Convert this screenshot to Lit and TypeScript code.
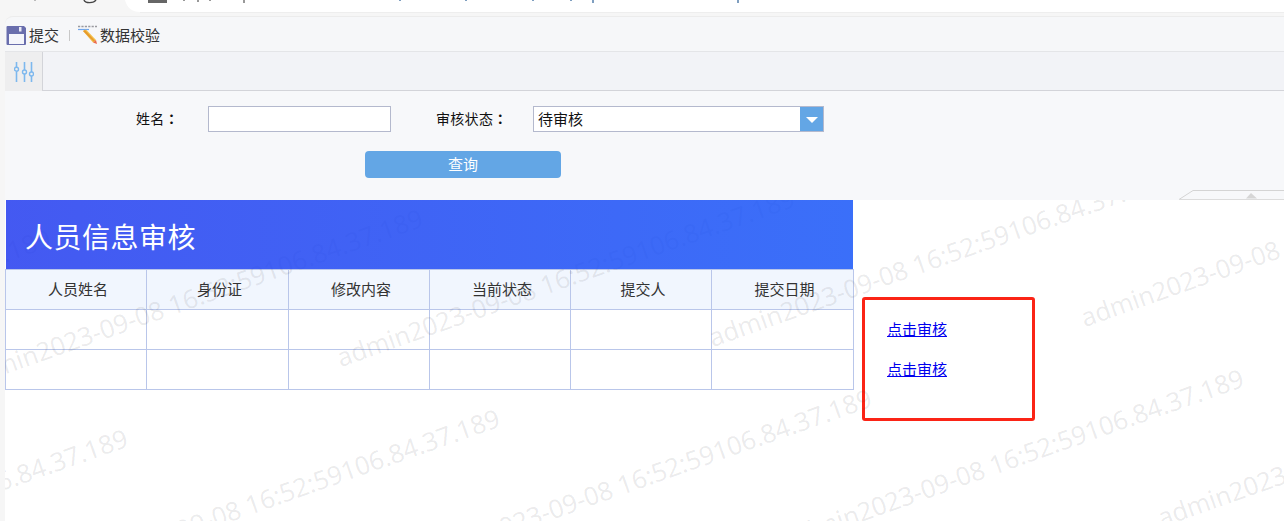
import { LitElement, html, css, svg } from "lit";
import { customElement } from "lit/decorators.js";

const WM = "admin2023-09-08 16:52:59106.84.37.189";
const marks: { x: number; y: number }[] = [];
for (let i = 0; i < 5; i++) {
  marks.push({ x: -407 + 372 * i, y: 210 - 20 * i });
  marks.push({ x: -330 + 372 * i, y: 410 - 20 * i });
}
const HEAD = ["人员姓名", "身份证", "修改内容", "当前状态", "提交人", "提交日期"];
const COLS = [141, 142, 141, 141, 141, 142];
const TICKS = [399, 465, 532, 570, 592, 737];

@customElement("app-root")
export class AppRoot extends LitElement {
  static styles = css`
    :host { display: block; position: relative; width: 1284px; height: 521px; overflow: hidden; background: #f6f6f6;
      font-family: "Noto Sans CJK SC", "Liberation Sans", sans-serif; font-size: 14px; color: #222; }
    .chrome { display: block; width: 1284px; height: 16px; }
    .frame { padding-left: 5px; }
    .toolbar { height: 36px; box-sizing: border-box; background: #f6f7f9; border-top: 1px solid #ececec;
      border-bottom: 1px solid #e4e5e8; border-top-left-radius: 8px; display: flex; align-items: center; padding: 2px 0 0 1px; font-size: 15px; }
    .tool { display: flex; align-items: center; color: #333; }
    .tool svg { display: block; flex: none; }
    .tool span { margin: -2px 0 0 2px; }
    .sep { width: 1px; height: 11px; background: #c8c8c8; margin: 0 8px 0 10px; }
    .tabs { height: 39px; box-sizing: border-box; background: #f2f3f7; border-bottom: 1px solid #d3d4d9; display: flex; }
    .tab { width: 38px; background: #eeeeef; border-right: 1px solid #d3d4d9; margin-bottom: -1px; display: flex; align-items: center; justify-content: center; box-sizing: border-box; }
    .form { height: 109px; box-sizing: border-box; background: #f7f8fa; padding-top: 15px; }
    .row { display: flex; align-items: center; height: 26px; color: #111; font-size: 14px; }
    .label1, .label2 { margin-top: -2px; letter-spacing: 0.3px; }
    .label1 { margin-left: 131px; width: 72px; }
    .label2 { margin-left: 45px; width: 97px; }
    .colon { font-family: "Noto Sans CJK TC", sans-serif; letter-spacing: 0; font-weight: 700; }
    .input { width: 183px; height: 26px; box-sizing: border-box; background: #fff; border: 1px solid #b4b9cd; }
    .select { width: 291px; height: 26px; box-sizing: border-box; background: #fff; border: 1px solid #b4b9cd; display: flex; align-items: center; justify-content: space-between; padding-left: 4px; color: #111; font-size: 15px; }
    .select span { margin-top: -2px; }
    .arrow { width: 23px; height: 24px; background: #63a6e5; display: flex; align-items: center; justify-content: center; }
    .arrow i { display: block; width: 0; height: 0; border-left: 6px solid transparent; border-right: 6px solid transparent; border-top: 6px solid #fff; margin-top: 2px; }
    .query { display: block; margin: 19px 0 0 360px; width: 196px; height: 27px; padding: 0 0 2px; border: 0; border-radius: 4px; background: #63a6e5; color: #fff; font: inherit; font-size: 15px; text-align: center; }
    .tag { position: absolute; right: 0; top: 190px; width: 105px; height: 10px; }
    .content { position: relative; height: 321px; background: #fff; padding-left: 1px; display: flex; overflow: hidden; }
    .main { width: 849px; flex: none; }
    .title { position: relative; z-index: 1; height: 69px; box-sizing: border-box; width: 847px; background: linear-gradient(90deg, rgba(35, 60, 239, 0.85), rgba(24, 86, 248, 0.85)); color: #fff; font-size: 28px; line-height: 72px; padding-left: 19px; letter-spacing: 0.5px; }
    table { border-collapse: collapse; table-layout: fixed; width: 848px; margin-left: -1px; }
    td, th { border: 1px solid #b9c6ea; height: 40px; padding: 0; font-weight: 400; text-align: center; color: #333; font-size: 15px; box-sizing: border-box; }
    th { background: #f1f6fe; padding: 0 0 2px 4px; }
    .review { width: 173px; height: 124px; box-sizing: border-box; margin: 97px 0 0 7px; border: 3px solid #fb2416; border-radius: 3px; padding-top: 9px; padding-left: 22px; flex: none; font-size: 15px; }
    .review a { display: block; height: 40px; line-height: 40px; color: #0000ee; text-decoration: none; }
    .review a span { text-decoration: underline; }
    .wm-layer { position: absolute; inset: 0; pointer-events: none; overflow: hidden; }
    .wm { position: absolute; white-space: nowrap; font-family: "Open Sans", sans-serif; font-size: 25.6px; line-height: 1; color: rgba(60, 60, 70, 0.11); transform: rotate(-19.5deg); transform-origin: 0 100%; margin-top: -25px; }
  `;

  private chrome() {
    return html`<svg class="chrome" viewBox="0 0 1284 16">
      <rect x="0" y="0" width="1284" height="16" fill="#f6f6f6"></rect>
      <path d="M125 0 C127 8 132 12 140 12 H1284 V0 Z" fill="#fff"></path>
      <path d="M140 12.5 H1284" stroke="#eeeeee"></path>
      <path d="M84 0 C85 3.5 94 3.5 96 0" fill="none" stroke="#444" stroke-width="1.4"></path>
      <rect x="34" y="0" width="2" height="1" fill="#bbb"></rect>
      <rect x="148" y="0" width="19" height="3" fill="#666"></rect>
      <rect x="183" y="0" width="2" height="1" fill="#999"></rect>
      <rect x="197" y="0" width="2" height="2" fill="#999"></rect>
      <rect x="209" y="0" width="2" height="1" fill="#999"></rect>
      <rect x="243" y="0" width="2" height="3" fill="#999"></rect>
      ${TICKS.map(
        (x) => svg`<rect x=${x} y="0" width="2" height=${x > 580 ? 3 : 1} fill="#7f9fc0"></rect>`
      )}
    </svg>`;
  }

  private saveIcon() {
    return html`<svg width="21" height="21" viewBox="0 0 21 21">
      <path d="M1.5 1 H18 L20 3 V19 a1 1 0 0 1 -1 1 H1.5 a1 1 0 0 1 -1 -1 V2 a1 1 0 0 1 1 -1 Z" fill="#696ead"></path>
      <rect x="3" y="9" width="15" height="10" fill="#f4f5fb"></rect>
      <rect x="13" y="2" width="2.5" height="4.5" fill="#e9eaf6"></rect>
    </svg>`;
  }

  private checkIcon() {
    return html`<svg width="20" height="20" viewBox="0 0 20 20">
      <path d="M0 4.5 H11" stroke="#6ea6ee" stroke-width="1.2"></path>
      <path d="M0 1.5 H19" stroke="#9a9aa0" stroke-width="1.4" stroke-dasharray="2.2 1.2"></path>
      <path d="M5 6 L8 4.5 L18 15 L15 17.5 Z" fill="#f3c04a"></path>
      <path d="M5 6 L7 5 L17 15.8 L15.8 16.8 Z" fill="#e79a2c"></path>
      <path d="M15 17.5 L18 15 L19 19 Z" fill="#ec6a4c"></path>
    </svg>`;
  }

  private sliders() {
    return html`<svg width="20" height="20" viewBox="0 0 20 20" fill="none" stroke="#7db8ee" stroke-width="1.6">
      <path d="M2.5 0 V5 M2.5 9.5 V20 M10.5 0 V8 M10.5 12 V20 M17.5 0 V10 M17.5 14 V20"></path>
      <circle cx="2.5" cy="7.2" r="2" stroke-width="1.4"></circle>
      <circle cx="10.5" cy="10" r="2" stroke-width="1.4"></circle>
      <circle cx="17.5" cy="12" r="2" stroke-width="1.4"></circle>
    </svg>`;
  }

  render() {
    return html`
      ${this.chrome()}
      <div class="frame">
        <div class="toolbar">
          <div class="tool">${this.saveIcon()}<span>提交</span></div>
          <div class="sep"></div>
          <div class="tool">${this.checkIcon()}<span>数据校验</span></div>
        </div>
        <div class="tabs"><div class="tab">${this.sliders()}</div></div>
        <div class="form">
          <div class="row">
            <div class="label1">姓名<span class="colon">：</span></div>
            <div class="input"></div>
            <div class="label2">审核状态<span class="colon">：</span></div>
            <div class="select"><span>待审核</span><div class="arrow"><i></i></div></div>
          </div>
          <button class="query">查询</button>
        </div>
        <div class="content">
          <div class="main">
            <div class="title">人员信息审核</div>
            <table>
              <colgroup>${COLS.map((w) => html`<col style="width:${w}px" />`)}</colgroup>
              <tr>${HEAD.map((h) => html`<th>${h}</th>`)}</tr>
              ${[0, 1].map(() => html`<tr>${HEAD.map(() => html`<td></td>`)}</tr>`)}
            </table>
          </div>
          <div class="review">
            <a href="#"><span>点击审核</span></a>
            <a href="#"><span>点击审核</span></a>
          </div>
          <div class="wm-layer">
            ${marks.map((m) => html`<div class="wm" style="left:${m.x}px;top:${m.y}px">${WM}</div>`)}
          </div>
        </div>
      </div>
      <svg class="tag" viewBox="0 0 105 10" fill="none">
        <path d="M0 9.5 L14 0.5 H105" stroke="#d4d4d4"></path>
        <path d="M0 9.5 H105" stroke="#dcdcdc"></path>
        <path d="M67 8.5 L72 3 L78 8.5 Z" fill="#d6d6d6"></path>
      </svg>
    `;
  }
}
